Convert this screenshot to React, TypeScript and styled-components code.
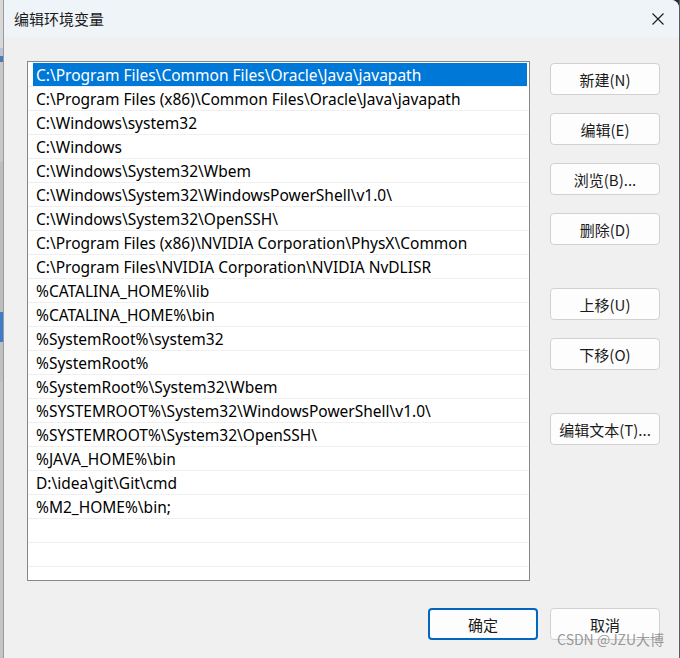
import { FC } from "react"
import styled, { createGlobalStyle } from "styled-components"

const GlobalStyle = createGlobalStyle`
  html, body {
    margin: 0;
    padding: 0;
    background: #2b2b2b;
  }
  body {
    font-family: "Noto Sans", "Noto Sans CJK SC", sans-serif;
  }
`

const paths = [
  "C:\\Program Files\\Common Files\\Oracle\\Java\\javapath",
  "C:\\Program Files (x86)\\Common Files\\Oracle\\Java\\javapath",
  "C:\\Windows\\system32",
  "C:\\Windows",
  "C:\\Windows\\System32\\Wbem",
  "C:\\Windows\\System32\\WindowsPowerShell\\v1.0\\",
  "C:\\Windows\\System32\\OpenSSH\\",
  "C:\\Program Files (x86)\\NVIDIA Corporation\\PhysX\\Common",
  "C:\\Program Files\\NVIDIA Corporation\\NVIDIA NvDLISR",
  "%CATALINA_HOME%\\lib",
  "%CATALINA_HOME%\\bin",
  "%SystemRoot%\\system32",
  "%SystemRoot%",
  "%SystemRoot%\\System32\\Wbem",
  "%SYSTEMROOT%\\System32\\WindowsPowerShell\\v1.0\\",
  "%SYSTEMROOT%\\System32\\OpenSSH\\",
  "%JAVA_HOME%\\bin",
  "D:\\idea\\git\\Git\\cmd",
  "%M2_HOME%\\bin;",
  "",
  "",
  "",
]

const sideButtons = [
  { label: "新建(N)", gap: 2 },
  { label: "编辑(E)", gap: 18 },
  { label: "浏览(B)...", gap: 18 },
  { label: "删除(D)", gap: 18 },
  { label: "上移(U)", gap: 43 },
  { label: "下移(O)", gap: 18 },
  { label: "编辑文本(T)...", gap: 43 },
]

const Page = styled.div`
  width: 680px;
  height: 658px;
  display: flex;
  overflow: hidden;
`

const BackStrip = styled.div`
  width: 4px;
  display: flex;
  flex-direction: column;
  background: #c4c4c4;
  border-right: 1px solid #9a9a9a;
  box-sizing: border-box;
`

const StripBit = styled.div<{ $h: number; $color: string }>`
  height: ${({ $h }) => $h}px;
  background: ${({ $color }) => $color};
`

const RightStrip = styled.div`
  width: 1px;
  background: #5a5a66;
`

const Dialog = styled.div`
  width: 675px;
  display: flex;
  flex-direction: column;
  border-top-right-radius: 8px;
  overflow: hidden;
  background: #f0f0f0;
`

const TitleBar = styled.div`
  height: 37px;
  flex-shrink: 0;
  display: flex;
  align-items: center;
  justify-content: space-between;
  padding: 0 14px 0 10px;
  background: #eff4f9;
`

const Title = styled.div`
  font-family: "Noto Sans CJK SC", sans-serif;
  font-size: 15px;
  color: #1a1a1a;
`

const CloseButton = styled.div`
  width: 14px;
  height: 14px;
  display: flex;
  align-items: center;
  justify-content: center;
`

const Body = styled.div`
  flex: 1;
  display: flex;
  flex-direction: column;
  padding: 24px 19px 18px 23px;
`

const Main = styled.div`
  display: flex;
  gap: 20px;
`

const ListBox = styled.div`
  width: 503px;
  height: 520px;
  box-sizing: border-box;
  border: 1px solid #828790;
  background: #ffffff;
  padding-top: 1px;
  overflow: hidden;
`

const Row = styled.div`
  height: 24px;
  box-sizing: border-box;
  border-bottom: 1px solid #f0f0f0;
  display: flex;
`

const RowInner = styled.div<{ $selected?: boolean }>`
  flex: 1;
  margin: 0 2px 0 5px;
  padding: 1px 0 0 3px;
  display: flex;
  align-items: center;
  font-family: "Noto Sans", "Noto Sans CJK SC", sans-serif;
  font-size: 15.5px;
  white-space: nowrap;
  color: ${({ $selected }) => ($selected ? "#ffffff" : "#000000")};
  background: ${({ $selected }) => ($selected ? "#0078d7" : "transparent")};
`

const ButtonColumn = styled.div`
  display: flex;
  flex-direction: column;
`

const Button = styled.div<{ $gap?: number; $primary?: boolean }>`
  width: 110px;
  height: 32px;
  box-sizing: border-box;
  margin-top: ${({ $gap }) => $gap ?? 0}px;
  border: ${({ $primary }) =>
    $primary ? "2px solid #0067c0" : "1px solid #d1d1d1"};
  border-radius: 4px;
  background: #fdfdfd;
  display: flex;
  align-items: center;
  justify-content: center;
  font-family: "Noto Sans CJK SC", sans-serif;
  font-size: 15px;
  color: #1a1a1a;
`

const Footer = styled.div`
  margin-top: 27px;
  display: flex;
  justify-content: flex-end;
  gap: 12px;
  position: relative;
`

const Watermark = styled.div`
  position: absolute;
  right: -4px;
  bottom: -9px;
  font-family: "Noto Sans CJK SC", sans-serif;
  font-size: 14px;
  color: rgba(120, 120, 120, 0.75);
  white-space: nowrap;
`

const CloseIcon: FC = () => (
  <svg width="12" height="12" viewBox="0 0 12 12">
    <path d="M0.5 0.5 L11.5 11.5 M11.5 0.5 L0.5 11.5" stroke="#1a1a1a" strokeWidth="1.1" fill="none" />
  </svg>
)

export default function App() {
  return (
    <Page>
      <GlobalStyle />
      <BackStrip>
        <StripBit $h={48} $color="#d8d8d8" />
        <StripBit $h={8} $color="#b8c4d4" />
        <StripBit $h={6} $color="#4a7ab8" />
        <StripBit $h={100} $color="#c8c8c8" />
        <StripBit $h={150} $color="#bdbdbd" />
        <StripBit $h={30} $color="#3d7cc8" />
        <StripBit $h={40} $color="#c0c0c0" />
      </BackStrip>
      <Dialog>
        <TitleBar>
          <Title>编辑环境变量</Title>
          <CloseButton>
            <CloseIcon />
          </CloseButton>
        </TitleBar>
        <Body>
          <Main>
            <ListBox>
              {paths.map((p, i) => (
                <Row key={i}>
                  <RowInner $selected={i === 0}>{p}</RowInner>
                </Row>
              ))}
            </ListBox>
            <ButtonColumn>
              {sideButtons.map((b) => (
                <Button key={b.label} $gap={b.gap}>
                  {b.label}
                </Button>
              ))}
            </ButtonColumn>
          </Main>
          <Footer>
            <Button $primary>确定</Button>
            <Button>取消</Button>
            <Watermark>CSDN @JZU大博</Watermark>
          </Footer>
        </Body>
      </Dialog>
      <RightStrip />
    </Page>
  )
}
